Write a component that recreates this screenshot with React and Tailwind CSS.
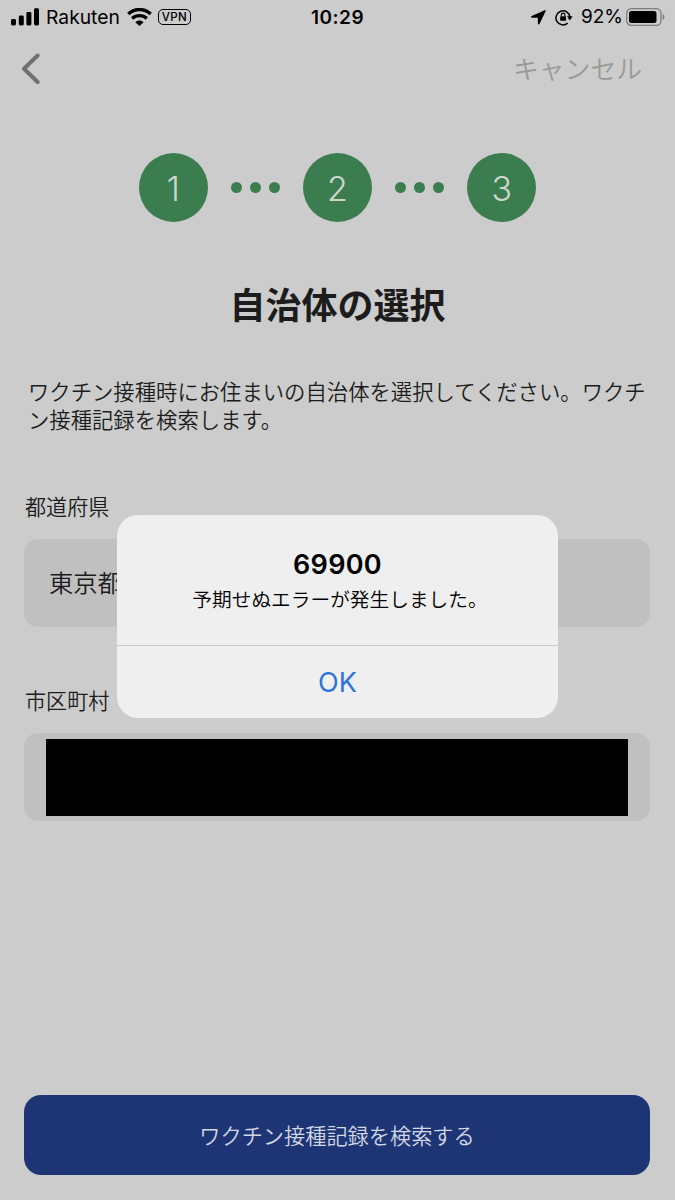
import React, { useState } from 'react';

const STEPS = [1, 2, 3];

function SignalIcon() {
  return (
    <svg width="29" height="18" viewBox="0 0 29 18" fill="currentColor">
      <rect x="0" y="11" width="5" height="6.5" rx="1.4" />
      <rect x="7.8" y="7.5" width="5" height="10" rx="1.4" />
      <rect x="15.4" y="4" width="5" height="13.5" rx="1.4" />
      <rect x="23" y="0.3" width="5" height="17.2" rx="1.4" />
    </svg>
  );
}

function WifiIcon() {
  return (
    <svg width="25" height="18" viewBox="0 0 25 18" fill="none" stroke="currentColor">
      <path d="M1.3 6C7.6 .1 17.4 .1 23.7 6" strokeWidth="3.4" />
      <path d="M5.2 10.5C9.2 6.7 15.8 6.7 19.8 10.5" strokeWidth="3.3" />
      <path d="M12.5 18 8.4 14.2C10.8 11.9 14.2 11.9 16.6 14.2Z" fill="currentColor" stroke="none" />
    </svg>
  );
}

function LocationIcon() {
  return (
    <svg width="15" height="15" viewBox="0 0 15 15" fill="currentColor">
      <path d="M13.6.2.7 6.1c-.9.4-.7 1.6.3 1.6l5.5.1c.2 0 .3.1.3.3l.1 5.400c0 1 1.200 1.300 1.700.3L14.600 1.200c.3-.7-.3-1.300-1-1Z" />
    </svg>
  );
}

function RotationLockIcon() {
  return (
    <svg width="18" height="17" viewBox="0 0 18 17" fill="none" stroke="currentColor">
      <path d="M12.600 14.100A7 7 0 1 1 14.900 8" strokeWidth="1.5" />
      <path d="M12 7.300H17.600L14.800 11.400Z" fill="currentColor" stroke="none" />
      <rect x="5.200" y="7.300" width="5.800" height="4.500" rx=".6" fill="currentColor" stroke="none" />
      <path d="M6.300 7.500V5.900a1.800 1.800 0 0 1 3.600 0v1.600" strokeWidth="1.100" />
    </svg>
  );
}

function BatteryIcon() {
  return (
    <svg width="40" height="18" viewBox="0 0 40 18">
      <rect x=".7" y=".7" width="34.3" height="16.6" rx="4.6" fill="none" stroke="#7c7c7c" strokeWidth="1.3" />
      <rect x="3" y="3" width="27.5" height="12" rx="2.5" fill="#000" />
      <path d="M36.7 6v6c2.300-.9 2.300-5.100 0-6Z" fill="#7c7c7c" />
    </svg>
  );
}

function StatusBar() {
  return (
    <div className="grid h-[34px] grid-cols-3 items-center pr-[9px] pl-[11px] text-[19px] text-black">
      <div className="flex items-center">
        <SignalIcon />
        <span className="ml-[6px] pt-px text-[19.3px]">Rakuten</span>
        <span className="ml-[7px]"><WifiIcon /></span>
        <span className="ml-[6px] flex h-4 w-[33px] items-center justify-center rounded-[5px] border border-black pt-px text-[11.5px] leading-none font-medium tracking-[0.3px]">
          VPN
        </span>
      </div>
      <div className="pt-[2px] pr-[2px] text-center font-semibold tracking-[0.5px]">10:29</div>
      <div className="flex items-center justify-end">
        <LocationIcon />
        <span className="ml-[9px]"><RotationLockIcon /></span>
        <span className="ml-[8px] pt-px">92%</span>
        <span className="ml-[3px]"><BatteryIcon /></span>
      </div>
    </div>
  );
}

function Stepper() {
  return (
    <div className="mt-[50px] flex items-center justify-center">
      {STEPS.map((step, i) => (
        <React.Fragment key={step}>
          {i > 0 && (
            <div className="flex w-[95.3px] justify-center gap-[8.5px]">
              <span className="size-[10.5px] rounded-full bg-[#3c7d50]"></span>
              <span className="size-[10.5px] rounded-full bg-[#3c7d50]"></span>
              <span className="size-[10.5px] rounded-full bg-[#3c7d50]"></span>
            </div>
          )}
          <div className="flex size-[69px] items-center justify-center rounded-full bg-[#3c7d50] pt-[2px] text-[34px] font-light text-[#cbd8ce]">
            {step}
          </div>
        </React.Fragment>
      ))}
    </div>
  );
}

function Field({ label, children }) {
  return (
    <div>
      <div className="h-8 pt-px pl-px text-[21.1px] leading-8 font-[350]">{label}</div>
      <div className="mt-4 flex h-[88px] items-center rounded-[14px] bg-[#c0c0c0]">{children}</div>
    </div>
  );
}

function ErrorAlert({ code, message, onClose }) {
  return (
    <div className="absolute top-[515px] left-[117px] flex h-[203px] w-[441px] flex-col overflow-hidden rounded-[21px] bg-[#efefef] text-center text-black">
      <div className="h-[131px] border-b border-[#cdcdcd] pt-[33px]">
        <h2 className="text-[27px] leading-[34px] font-semibold tracking-[0.3px]">{code}</h2>
        <p className="mt-[4px] pl-[5px] text-[19.7px] leading-[28px] font-[350]">{message}</p>
      </div>
      <button className="flex-1 pt-[3px] text-[27px] text-[#2e74d9]" onClick={onClose}>OK</button>
    </div>
  );
}

export default function App() {
  const [error, setError] = useState({ code: '69900', message: '予期せぬエラーが発生しました。' });

  return (
    <div className="relative flex h-[1200px] w-[675px] flex-col overflow-hidden bg-[#cccccc] font-['Inter','Noto_Sans_CJK_JP',sans-serif] text-[#1c1c1c]">
      <StatusBar />

      {/* Nav */}
      <div className="flex h-[69px] items-center justify-between pr-[33px] pl-[20px]">
        <svg width="20" height="32" viewBox="0 0 20 32" fill="none" stroke="#707070" strokeWidth="4" strokeLinecap="round" strokeLinejoin="round">
          <path d="M17.600 2.500 4 15.700 17.600 29" />
        </svg>
        <button className="pt-[3px] text-[25.8px] font-[350] text-[#999999]">キャンセル</button>
      </div>

      <Stepper />

      <h1 className="mt-[58px] text-center text-[36px] leading-[52px] font-bold">自治体の選択</h1>

      <p className="mt-[46px] pr-6 pl-[28px] text-[21.35px] leading-[28px] font-[350]">
        ワクチン接種時にお住まいの自治体を選択してください。ワクチン接種記録を検索します。
      </p>

      {/* Form */}
      <div className="mt-[57px] flex flex-col gap-[58px] pr-[25px] pl-[24px]">
        <Field label="都道府県">
          <span className="pl-[25px] text-[24.3px] font-[350]">東京都</span>
        </Field>
        <Field label="市区町村">
          <div className="ml-[22px] h-[77px] w-[582px] bg-black"></div>
        </Field>
      </div>

      <button className="mt-auto mr-[25px] mb-[25px] ml-[24px] h-[80px] rounded-[17px] bg-[#1d3575] pt-[3px] text-[21.2px] font-[350] text-[#d2d7e3]">
        ワクチン接種記録を検索する
      </button>

      {error && <ErrorAlert code={error.code} message={error.message} onClose={() => setError(null)} />}
    </div>
  );
}
